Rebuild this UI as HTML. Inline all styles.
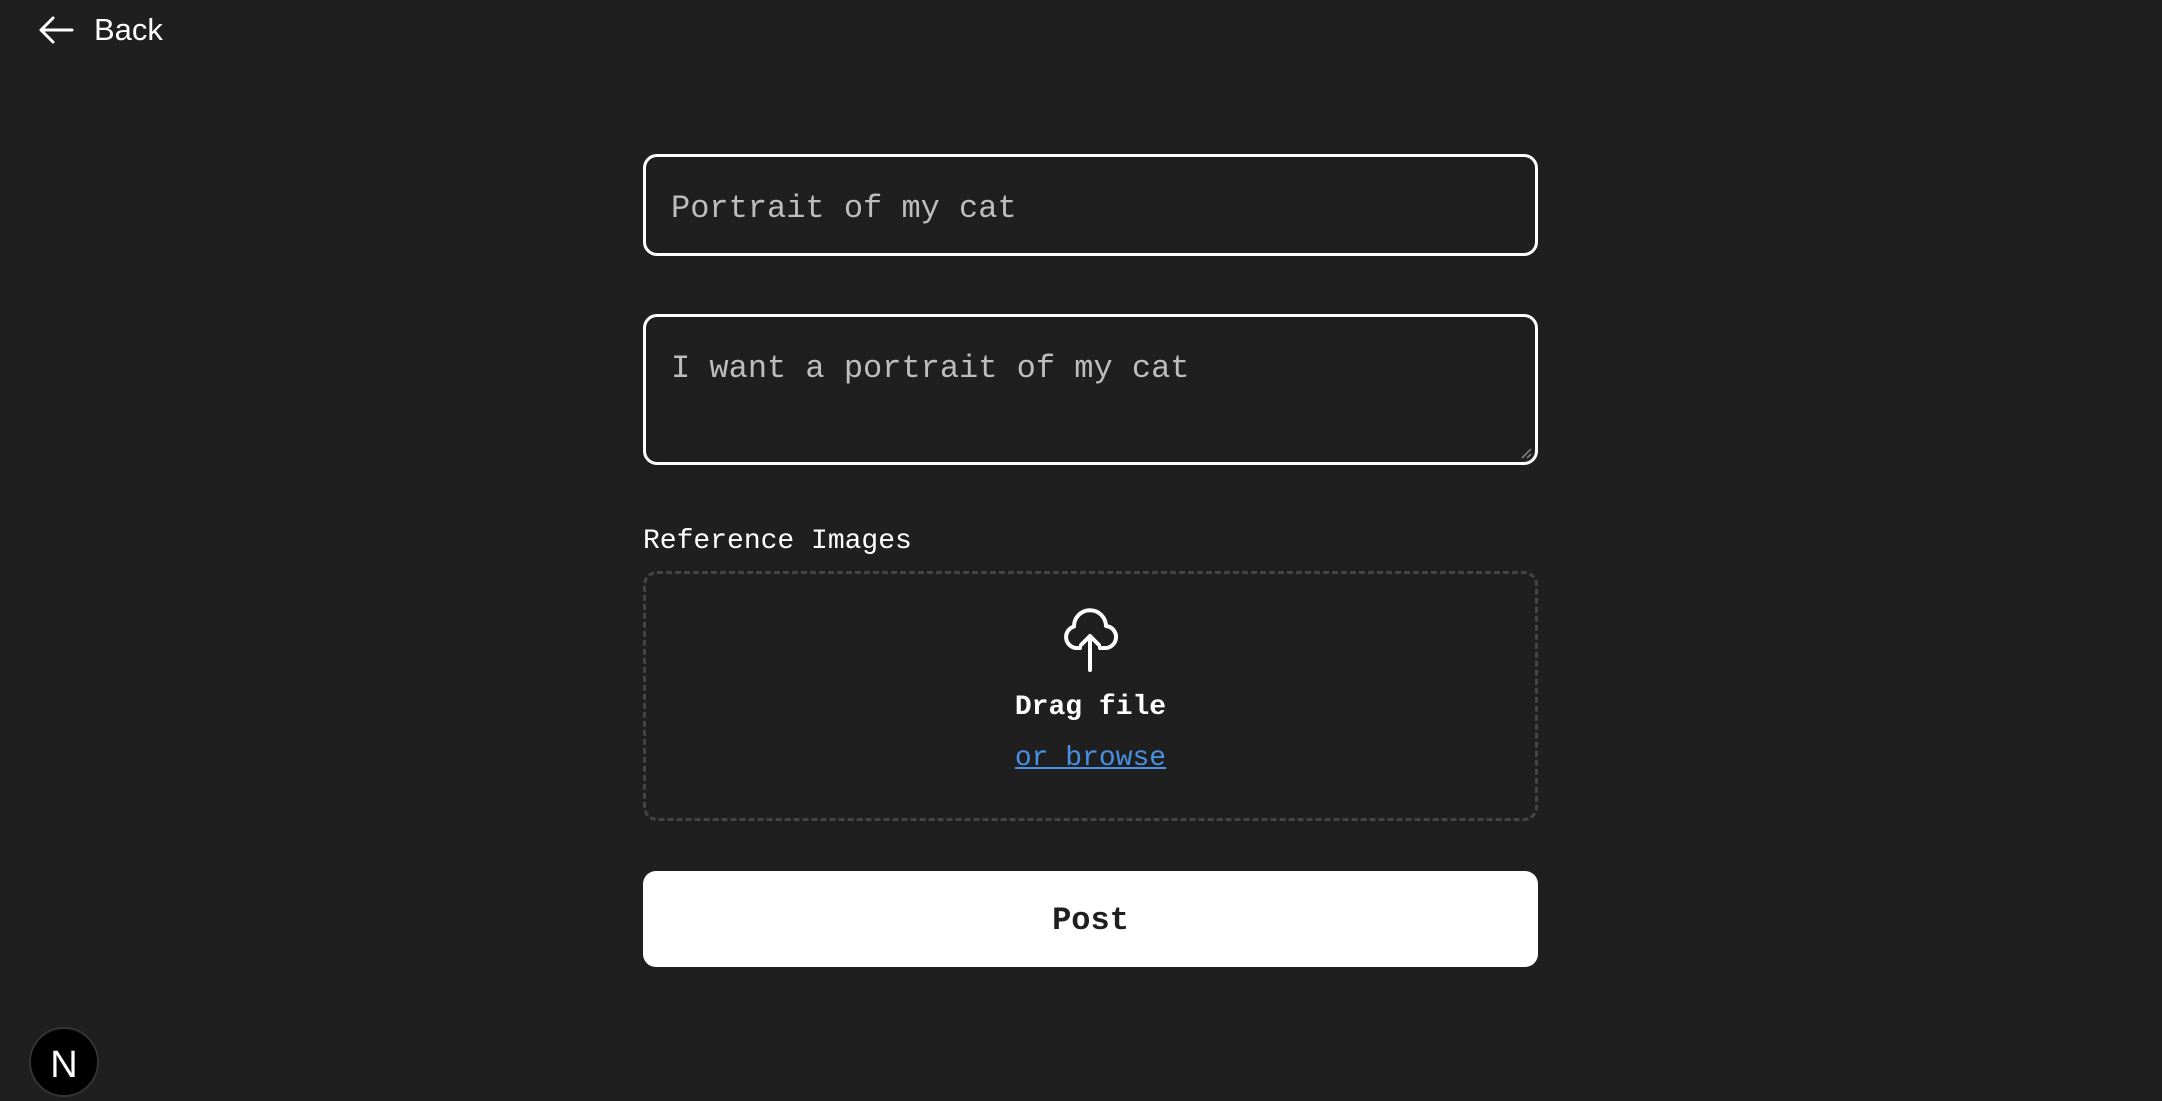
<!DOCTYPE html>
<html><head><meta charset="utf-8"><style>
html,body{margin:0;padding:0;background:#1f1f1f;width:2162px;height:1072px;overflow:hidden;font-family:"Liberation Mono",monospace;}
.back{position:absolute;left:38px;top:12px;display:flex;align-items:center;color:#fff;font-family:"Liberation Sans",sans-serif;font-size:31px;}
.back svg{margin-right:20px}
.box{position:absolute;left:643px;width:889px;border:3px solid #fff;border-radius:14px;box-sizing:content-box;}
.ph{position:absolute;left:25px;color:#bdbdbd;font-size:32px;}
.label{position:absolute;left:643px;top:526px;color:#fff;font-size:28px;}
.drop{position:absolute;left:643px;top:571px;width:889px;height:244px;border:3px dashed #444;border-radius:14px;}
.post{position:absolute;left:643px;top:871px;width:895px;height:96px;background:#fff;border-radius:13px;color:#1f1f1f;font-weight:bold;font-size:32px;text-align:center;line-height:100px;}
.n{position:absolute;left:29px;top:1027px;width:66px;height:66px;border-radius:50%;background:#000;border:2px solid #333;color:#fff;font-family:"Liberation Sans",sans-serif;font-size:38px;text-align:center;line-height:72px;}
</style></head><body>
<div class="back"><svg width="36" height="30" viewBox="0 0 36 30"><path d="M34 15H3M15 3L3 15l12 12" fill="none" stroke="#fff" stroke-width="3" stroke-linecap="round" stroke-linejoin="round"/></svg>Back</div>
<div class="box" style="top:154px;height:96px"><div class="ph" style="top:33px">Portrait of my cat</div></div>
<div class="box" style="top:314px;height:145px"><div class="ph" style="top:33px">I want a portrait of my cat</div>
<svg style="position:absolute;right:3px;bottom:3px" width="12" height="12"><path d="M11 2L2 11M11 7L7 11" stroke="#888" stroke-width="1.5"/></svg></div>
<div class="label">Reference Images</div>
<div class="drop">
<svg style="position:absolute;left:416px;top:34px" width="56" height="64" viewBox="0 0 56 64"><path d="M18 40h-4a11 11 0 0 1-2-21.5A16 16 0 0 1 44 18a11 11 0 0 1-2 22h-4" fill="none" stroke="#fff" stroke-width="4" stroke-linecap="round" stroke-linejoin="round"/><path d="M28 62V28M19 37l9-9 9 9" fill="none" stroke="#fff" stroke-width="4" stroke-linecap="round" stroke-linejoin="round"/></svg>
<div style="position:absolute;left:0;right:0;top:118px;text-align:center;color:#fff;font-size:28px;font-weight:bold">Drag file</div>
<div style="position:absolute;left:0;right:0;top:169px;text-align:center;color:#4a90e2;font-size:28px;text-decoration:underline">or browse</div>
</div>
<div class="post">Post</div>
<div class="n">N</div>
</body></html>
